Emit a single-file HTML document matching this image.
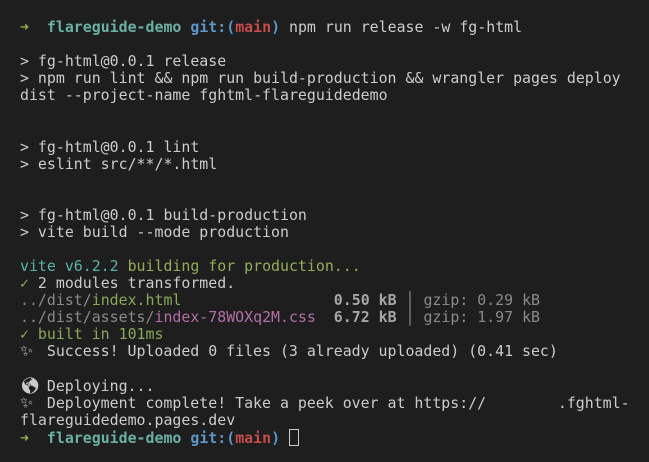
<!DOCTYPE html>
<html><head><meta charset="utf-8"><style>
html,body{margin:0;padding:0;background:#1e1e1e;width:649px;height:462px;overflow:hidden}
pre{margin:0;position:absolute;left:20px;top:19px;font-family:"DejaVu Sans Mono","Liberation Mono",monospace;font-size:14.9px;line-height:17.08px;color:#cccccc;white-space:pre}
.ar{color:#8fae4c;font-weight:bold}
.cy{color:#6bb0a4;font-weight:bold}
.bl{color:#5d96c7;font-weight:bold}
.rd{color:#c64b4b;font-weight:bold}
.vt{color:#5ab3a8}
.yg{color:#93ad5a}
.gr{color:#89a85a}
.dm{color:#8a8a8a}
.pk{color:#b26fa6}
.sz{color:#a6a6a6;font-weight:bold}
.em{display:inline-block;width:17.9px;font-family:"DejaVu Sans",sans-serif;font-size:16px;line-height:1px;color:#ccc}
.cur{display:inline-block;width:8px;height:15px;border:1px solid #ccc;vertical-align:-3px;line-height:1px}
</style></head><body><pre><span class="ar">➜</span>  <span class="cy">flareguide-demo</span> <span class="bl">git:(</span><span class="rd">main</span><span class="bl">)</span> npm run release -w fg-html

&gt; fg-html@0.0.1 release
&gt; npm run lint &amp;&amp; npm run build-production &amp;&amp; wrangler pages deploy
dist --project-name fghtml-flareguidedemo


&gt; fg-html@0.0.1 lint
&gt; eslint src/**/*.html


&gt; fg-html@0.0.1 build-production
&gt; vite build --mode production

<span class="vt">vite v6.2.2</span> <span class="yg">building for production...</span>
<span class="gr">✓</span> 2 modules transformed.
<span class="dm">../dist/</span><span class="gr">index.html</span>                 <span class="sz">0.50 kB</span> <span class="dm">│ gzip: 0.29 kB</span>
<span class="dm">../dist/assets/</span><span class="pk">index-78WOXq2M.css</span>  <span class="sz">6.72 kB</span> <span class="dm">│ gzip: 1.97 kB</span>
<span class="gr">✓ built in 101ms</span>
<span class="em">✨&#xFE0E;</span> Success! Uploaded 0 files (3 already uploaded) (0.41 sec)

<span class="em">🌎&#xFE0E;</span> Deploying...
<span class="em">✨&#xFE0E;</span> Deployment complete! Take a peek over at https://        .fghtml-
flareguidedemo.pages.dev
<span class="ar">➜</span>  <span class="cy">flareguide-demo</span> <span class="bl">git:(</span><span class="rd">main</span><span class="bl">)</span> <span class="cur"></span></pre></body></html>
